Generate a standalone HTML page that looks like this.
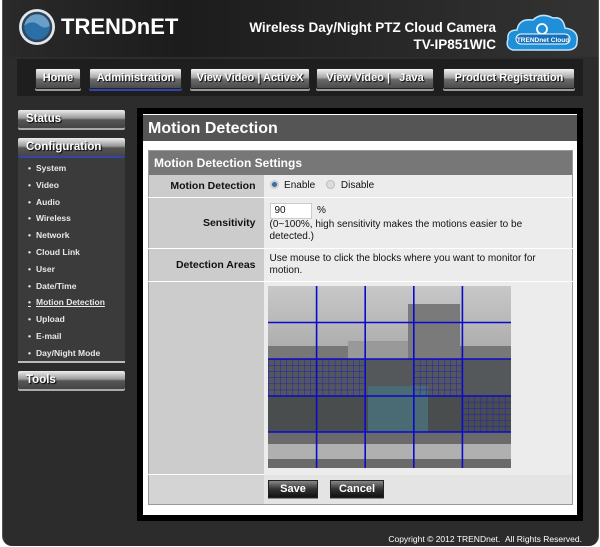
<!DOCTYPE html>
<html><head><meta charset="utf-8"><style>
*{margin:0;padding:0;box-sizing:border-box}
body{width:600px;height:547px;background:#fff;font-family:"Liberation Sans",sans-serif;position:relative;overflow:hidden}
.a{position:absolute}
.frame{left:2px;top:0;width:597px;height:546px;background:#2c2c2c;border-radius:0 0 10px 10px;border-left:1px solid #555;border-right:1px solid #555}
.hdr{left:3px;top:0;width:595px;height:57px;background:linear-gradient(90deg,#2a2a2a,#1c1c1c 30%,#262626 60%,#333);}
.nav{left:17px;top:59px;width:566px;height:37px;background:#1e1e1e}
.btn{position:absolute;top:68px;height:21px;background:linear-gradient(#f4f4f4,#a8a8a8 45%,#6a6a6a 55%,#4a4a4a);border:1px solid #222;border-radius:2px;color:#fff;font-weight:bold;font-size:11px;text-align:center;line-height:19px;text-shadow:1px 1px 1px #000;box-shadow:0 2px 0 #999;white-space:nowrap;overflow:hidden}
.side{position:absolute;left:18px;width:107px;height:18px;background:linear-gradient(#eee,#999 45%,#555 55%,#444);border-radius:2px;color:#fff;font-weight:bold;font-size:11.5px;padding-left:8px;line-height:18px;text-shadow:1px 1px 1px #000;box-shadow:0 2px 0 #aaa}
.menu{left:18px;top:158px;width:107px;height:203px;background:#3b3b3b}
.menu div{height:16.8px;color:#e8e8e8;font-size:8.5px;font-weight:bold;padding-left:10px;line-height:16.8px}
.menu div:before{content:"•";margin-right:5px}
td{font-size:10px;color:#111}
.lab{background:#cccccc;text-align:right;font-weight:bold;padding-right:8px;font-size:10.5px}
.val{background:#ececec;padding-left:6px}
.sb{position:absolute;top:480px;height:18px;background:linear-gradient(#888,#333 50%,#111);border:1px solid #222;color:#fff;font-weight:bold;font-size:11px;text-align:center;line-height:16px;box-shadow:0 1px 0 #888}
</style></head><body>
<div class="a frame"></div>
<div class="a hdr"></div>
<svg class="a" style="left:17px;top:7px" width="40" height="40" viewBox="0 0 40 40">
<circle cx="20" cy="20" r="18" fill="#dfe8ef"/><circle cx="20" cy="20" r="14" fill="#6aa0c8"/>
<path d="M6 20 Q14 12 22 18 Q28 23 34 18 A14 14 0 0 1 6 20Z" fill="#2a6fa6"/>
<circle cx="20" cy="20" r="14" fill="none" stroke="#33455a" stroke-width="2.5"/></svg>
<div class="a" style="left:61px;top:14px;color:#fff;font-weight:bold;font-size:22px;letter-spacing:0px">TRENDnET</div>
<div class="a" style="left:200px;top:19px;width:296px;text-align:right;color:#fff;font-weight:bold;font-size:13.5px;line-height:17px">Wireless Day/Night PTZ Cloud Camera<br>TV-IP851WIC</div>
<svg class="a" style="left:505px;top:12px" width="76" height="42" viewBox="0 0 76 42">
<path d="M8 38 Q0 36 3 27 Q2 18 12 18 Q14 6 28 8 Q36 0 48 6 Q58 4 60 16 Q74 18 72 30 Q72 38 62 38Z" fill="#1f8fd8" stroke="#bfe4ff" stroke-width="1.5"/>
<circle cx="37" cy="17" r="5" fill="none" stroke="#fff" stroke-width="1.8"/>
<rect x="11" y="22" width="54" height="10" rx="5" fill="#1470b8" stroke="#fff" stroke-width="1"/>
<text x="38" y="30" fill="#fff" font-size="6.5" font-weight="bold" text-anchor="middle" font-family="Liberation Sans">TRENDnet Cloud</text></svg>
<div class="a nav"></div>
<div class="btn" style="left:35px;width:46px">Home</div>
<div class="btn" style="left:89px;width:93px;box-shadow:0 2px 0 #3344aa">Administration</div>
<div class="btn" style="left:190px;width:120px">View Video | ActiveX</div>
<div class="btn" style="left:316px;width:118px">View Video | &nbsp;&nbsp;Java</div>
<div class="btn" style="left:443px;width:132px">Product Registration</div>
<div class="side" style="top:110px">Status</div>
<div class="side" style="top:138px;box-shadow:0 2px 0 #3344aa">Configuration</div>
<div class="a menu" style="padding-top:2px">
<div>System</div><div>Video</div><div>Audio</div><div>Wireless</div><div>Network</div><div>Cloud Link</div><div>User</div><div>Date/Time</div><div style="text-decoration:underline">Motion Detection</div><div>Upload</div><div>E-mail</div><div>Day/Night Mode</div></div>
<div class="a" style="left:18px;top:361px;width:107px;height:2px;background:#bbb"></div>
<div class="side" style="top:371px">Tools</div>
<div class="a" style="left:137px;top:108px;width:446px;height:413px;background:#000"></div>
<div class="a" style="left:143px;top:114px;width:434px;height:401px;background:#fff"></div>
<div class="a" style="left:143px;top:115px;width:434px;height:26px;background:#555;color:#fff;font-weight:bold;font-size:16px;padding-left:5px;line-height:27px">Motion Detection</div>
<table class="a" style="left:148px;top:150px;width:425px;border-collapse:collapse;border:1px solid #999" cellspacing="0">
<tr><td colspan="2" style="height:24px;background:#777;color:#fff;font-weight:bold;font-size:12px;padding-left:5px">Motion Detection Settings</td></tr>
<tr><td class="lab" style="width:115px;height:23px;border-bottom:1px solid #fff">Motion Detection</td><td class="val" style="border-bottom:1px solid #fff"><span style="display:inline-block;width:9px;height:9px;border-radius:50%;background:#3a6f9a;border:2px solid #ccd;vertical-align:-1px"></span> &nbsp;Enable &nbsp;&nbsp; <span style="display:inline-block;width:9px;height:9px;border-radius:50%;background:#ddd;border:1px solid #bbb;vertical-align:-1px"></span> &nbsp;Disable</td></tr>
<tr><td class="lab" style="height:51px;border-bottom:1px solid #fff">Sensitivity</td><td class="val" style="border-bottom:1px solid #fff;line-height:12px"><span style="display:inline-block;width:42px;height:16px;background:#fff;border:1px solid #ccc;padding-left:4px;line-height:14px">90</span> &nbsp;%<br>(0~100%, high sensitivity makes the motions easier to be<br>detected.)</td></tr>
<tr><td class="lab" style="height:33px;border-bottom:1px solid #fff">Detection Areas</td><td class="val" style="border-bottom:1px solid #fff;line-height:12px">Use mouse to click the blocks where you want to monitor for<br>motion.</td></tr>
<tr><td class="lab" style="height:193px;border-bottom:1px solid #fff"></td><td class="val"></td></tr>
<tr><td class="lab" style="height:30px;background:#d4d4d4"></td><td class="val" style="background:#e4e4e4"></td></tr>
</table>
<svg class="a" style="left:268px;top:286px" width="243" height="182" viewBox="0 0 243 182">
<defs><pattern id="f" width="6.075" height="6.1" patternUnits="userSpaceOnUse"><path d="M0 0H6.075M0 0V6.1" stroke="#1a1acc" stroke-width="0.9" fill="none"/></pattern>
<linearGradient id="sky" x1="0" y1="0" x2="0" y2="1"><stop offset="0" stop-color="#c8c8c8"/><stop offset="1" stop-color="#aaa"/></linearGradient></defs>
<rect width="243" height="70" fill="url(#sky)"/>
<rect x="0" y="60" width="243" height="15" fill="#777"/>
<rect x="80" y="55" width="60" height="18" fill="#999"/>
<rect x="140" y="18" width="52" height="55" fill="#7a7a7a"/>
<rect x="0" y="73" width="243" height="37" fill="#55585a"/>
<rect x="0" y="110" width="243" height="36" fill="#4a4d4e"/>
<rect x="100" y="100" width="60" height="46" fill="#4a6a74"/>
<rect x="0" y="146" width="243" height="36" fill="#6a6a6a"/>
<rect x="0" y="158" width="243" height="15" fill="#cfcfcf" opacity=".7"/>
<rect x="0" y="73" width="97.2" height="37" fill="url(#f)"/>
<rect x="145.8" y="73" width="48.6" height="37" fill="url(#f)"/>
<rect x="194.4" y="110" width="48.6" height="36" fill="url(#f)"/>
<g stroke="#0a0acc" stroke-width="1.6"><path d="M48.6 0V182M97.2 0V182M145.8 0V182M194.4 0V182M0 36.5H243M0 73H243M0 110H243M0 146H243"/></g>
</svg>
<div class="sb" style="left:268px;width:50px">Save</div>
<div class="sb" style="left:330px;width:54px">Cancel</div>
<div class="a" style="left:300px;top:534px;width:282px;text-align:right;color:#fff;font-size:8.5px">Copyright © 2012 TRENDnet. &nbsp;All Rights Reserved.</div>
</body></html>
